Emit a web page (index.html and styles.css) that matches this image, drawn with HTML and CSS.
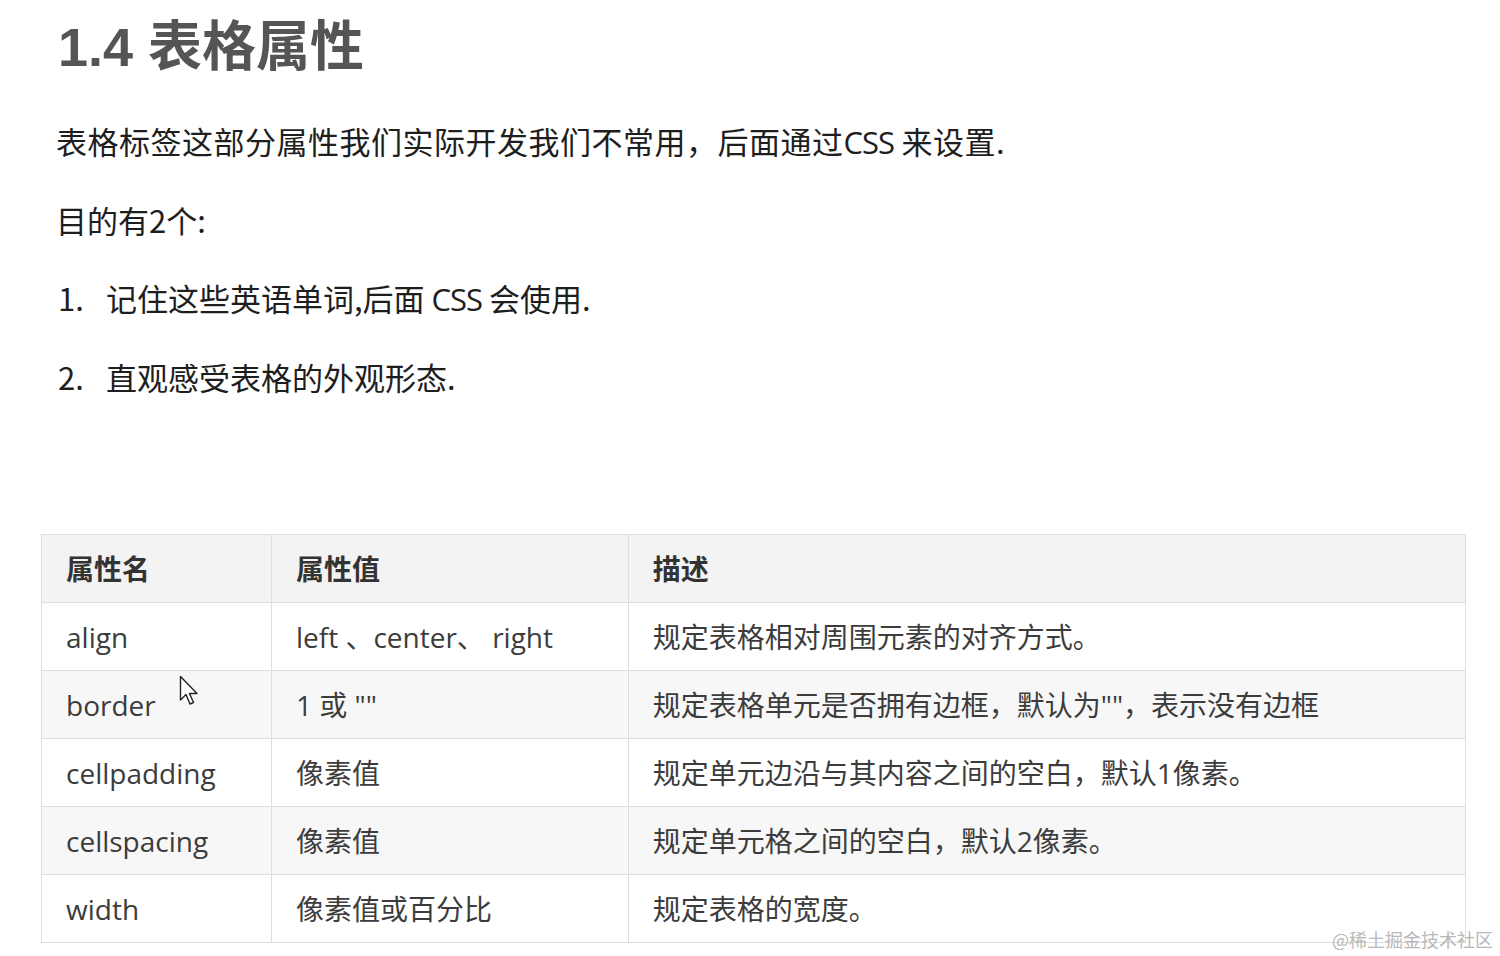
FILE: index.html
```html
<!DOCTYPE html>
<html lang="zh-CN">
<head>
<meta charset="utf-8">
<title>1.4 表格属性</title>
<link rel="stylesheet" href="styles.css">
</head>
<body>
<main class="page">
  <h1 class="title">1.4 表格属性</h1>
  <p class="para">表格标签这部分属性我们实际开发我们不常用，后面通过<span class="latin">CSS</span> 来设置.</p>
  <p class="para">目的有2个:</p>
  <ol class="list">
    <li class="item"><span class="num">1.</span><span>记住这些英语单词,后面 <span class="latin">CSS</span> 会使用.</span></li>
    <li class="item"><span class="num">2.</span><span>直观感受表格的外观形态.</span></li>
  </ol>
  <table class="attrs">
    <colgroup>
      <col class="c1"><col class="c2"><col class="c3">
    </colgroup>
    <thead>
      <tr><th>属性名</th><th>属性值</th><th>描述</th></tr>
    </thead>
    <tbody>
      <tr><td>align</td><td>left 、center、 right</td><td>规定表格相对周围元素的对齐方式。</td></tr>
      <tr><td>border</td><td>1 或 ""</td><td>规定表格单元是否拥有边框，默认为""，表示没有边框</td></tr>
      <tr><td>cellpadding</td><td>像素值</td><td>规定单元边沿与其内容之间的空白，默认1像素。</td></tr>
      <tr><td>cellspacing</td><td>像素值</td><td>规定单元格之间的空白，默认2像素。</td></tr>
      <tr><td>width</td><td>像素值或百分比</td><td>规定表格的宽度。</td></tr>
    </tbody>
  </table>
</main>
<svg class="cursor" width="24" height="34" viewBox="0 0 24 34" aria-hidden="true">
  <path d="M1.5 1.5 L1.5 25 L7 19.5 L11 29 L14.5 27.5 L10.5 18.5 L18 18.5 Z" fill="#fff" stroke="#222" stroke-width="1.4" stroke-linejoin="round"/>
</svg>
<div class="watermark">@稀土掘金技术社区</div>
</body>
</html>
```

FILE: styles.css
```css
html, body {
  margin: 0;
  padding: 0;
  background: #ffffff;
}

body {
  width: 1500px;
  height: 956px;
  overflow: hidden;
  position: relative;
  font-family: "Noto Sans CJK SC", "Open Sans", sans-serif;
  color: #1e1e1e;
}

.page {
  padding: 0 0 0 56px;
}

.title {
  margin: 17px 0 0 2px;
  font-family: "Liberation Sans", "Noto Sans CJK SC", sans-serif;
  font-size: 54px;
  line-height: 60px;
  font-weight: 700;
  color: #555555;
}

.para {
  margin: 41px 0 0 0;
  font-size: 31px;
  line-height: 46px;
  font-weight: 400;
  letter-spacing: 0.5px;
}

.para + .para {
  margin-top: 32px;
  letter-spacing: 0;
}

.latin {
  font-family: "Open Sans", sans-serif;
  letter-spacing: -1px;
}

.list {
  list-style: none;
  margin: 0;
  padding: 0;
}

.item {
  display: flex;
  margin-top: 32px;
  font-size: 31px;
  line-height: 46px;
}

.num {
  width: 50px;
  padding-left: 2px;
  box-sizing: border-box;
  font-family: "Noto Sans CJK SC", sans-serif;
  font-size: 31px;
}

.attrs {
  margin: 134px 0 0 -15px;
  width: 1425px;
  border-collapse: collapse;
  font-size: 28px;
  color: #3c3c3c;
}

.c1 { width: 230px; }
.c2 { width: 357px; }
.c3 { width: 838px; }

.attrs th,
.attrs td {
  border: 1px solid #dedede;
  height: 67px;
  padding: 0 0 0 24px;
  text-align: left;
  vertical-align: middle;
  font-family: "Open Sans", "Noto Sans CJK SC", sans-serif;
  line-height: 40px;
}

.attrs th {
  font-weight: 700;
  background: #f3f3f3;
  color: #333333;
}

.attrs tbody tr:nth-child(even) td {
  background: #f7f7f7;
}

.cursor {
  position: absolute;
  left: 179px;
  top: 675px;
}

.watermark {
  position: absolute;
  right: 7px;
  bottom: 4px;
  font-size: 18px;
  color: #b8b8b8;
  font-family: "Noto Sans CJK SC", sans-serif;
}
```
